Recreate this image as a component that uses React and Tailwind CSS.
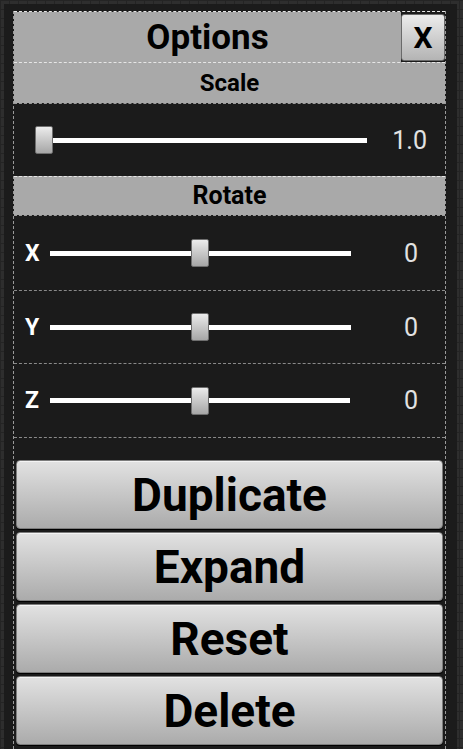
import React from "react";

const font = { fontFamily: "Roboto, 'Noto Sans', sans-serif" };

const Thumb = ({ left }) => (
  <div
    className="absolute top-1/2 -translate-y-1/2 w-[18px] h-[28px] rounded-[2px] border border-[#6e6e6e] bg-gradient-to-b from-[#ececec] to-[#a6a6a6]"
    style={{ left }}
  />
);

const Track = ({ thumbLeft }) => (
  <div className="relative flex-1 h-[28px] flex items-center">
    <div className="w-full h-[5px] bg-white" />
    <Thumb left={thumbLeft} />
  </div>
);

const Header = ({ children, className = "" }) => (
  <div
    className={
      "bg-[#a9a9a9] border-t border-dashed border-[#e6e6e6] flex items-center justify-center font-bold text-black " +
      className
    }
  >
    {children}
  </div>
);

const AxisRow = ({ label, h, trackEnd }) => (
  <div
    className={"flex items-center border-b border-dashed border-[#8a8a8a] " + h}
  >
    <div className="w-[36px] pl-[11px] text-white font-bold text-[23px] leading-none">
      {label}
    </div>
    <Track thumbLeft="47%" />
    <div className={"flex justify-end pr-[27px] text-[#e2e2e2] text-[25px] leading-none " + trackEnd}>
      0
    </div>
  </div>
);

const BigButton = ({ children }) => (
  <button className="mx-[2px] h-[69px] rounded-[4px] border border-[#7c7c7c] bg-gradient-to-b from-[#e2e2e2] to-[#ababab] shadow-[inset_0_1px_0_#f4f4f4,0_1px_0_#000] flex items-center justify-center text-black font-bold text-[46px] leading-none">
    {children}
  </button>
);

export default function App() {
  return (
    <div
      className="w-[463px] h-[749px] overflow-hidden bg-[#2e2e2e] [background-image:linear-gradient(#242424_1px,transparent_1px),linear-gradient(90deg,#242424_1px,transparent_1px)] [background-size:9px_9px] pt-[4px] pl-[4px]"
      style={font}
    >
      <div className="w-[453px] h-[760px] bg-[#1b1b1b] pl-[9px] pt-[7px]">
        <div className="w-[433px] h-full border-x border-dashed border-[#9a9a9a] flex flex-col">
          {/* title */}
          <div className="flex h-[51px] border-t border-dashed border-[#e6e6e6]">
            <div className="flex-1 bg-[#a9a9a9] flex items-center justify-center font-bold text-black text-[35px] leading-none pt-[1px]">
              Options
            </div>
            <button className="w-[44px] mt-[2px] mb-[1px] rounded-[3px] border border-[#6a6a6a] bg-gradient-to-b from-[#ececec] to-[#b4b4b4] flex items-center justify-center font-bold text-black text-[30px] leading-none">
              X
            </button>
          </div>

          <Header className="h-[41px] text-[24px]">Scale</Header>

          <div className="h-[73px] flex items-center pl-[21px] border-t border-dashed border-[#9a9a9a]">
            <Track thumbLeft="0px" />
            <div className="w-[78px] flex justify-end pr-[18px] text-[#e2e2e2] text-[25px] leading-none">
              1.0
            </div>
          </div>

          <Header className="h-[39px] text-[25px]">Rotate</Header>

          <div className="border-t border-dashed border-[#9a9a9a]">
            <AxisRow label="X" h="h-[75px]" trackEnd="w-[94px]" />
            <AxisRow label="Y" h="h-[73px]" trackEnd="w-[94px]" />
            <AxisRow label="Z" h="h-[74px]" trackEnd="w-[95px]" />
          </div>

          <div className="h-[22px]" />

          <div className="flex flex-col gap-[3px]">
            <BigButton>Duplicate</BigButton>
            <BigButton>Expand</BigButton>
            <BigButton>Reset</BigButton>
            <BigButton>Delete</BigButton>
          </div>
        </div>
      </div>
    </div>
  );
}
